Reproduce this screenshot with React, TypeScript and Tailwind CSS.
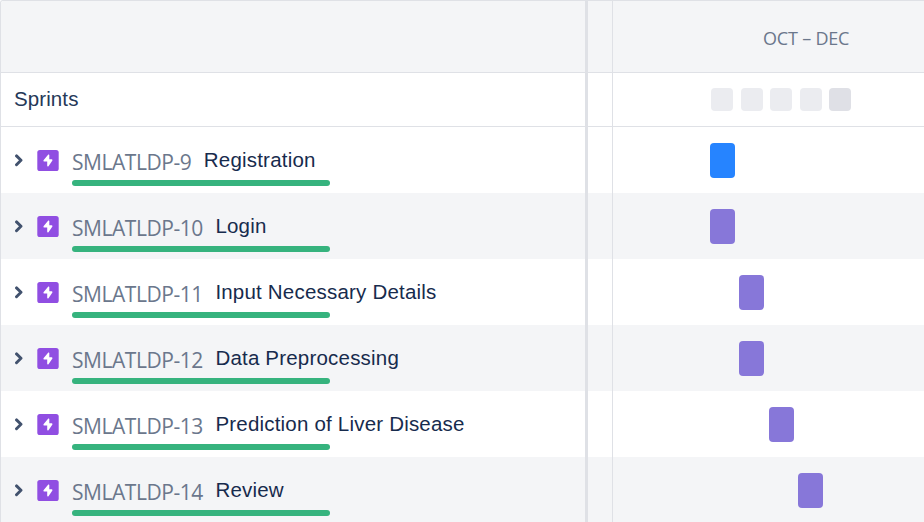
type Epic = {
  id: string;
  title: string;
  bar: string;
};

const epics: Epic[] = [
  { id: "SMLATLDP-9", title: "Registration", bar: "ml-[97px] bg-[#2684ff]" },
  { id: "SMLATLDP-10", title: "Login", bar: "ml-[97px] bg-[#8777d9]" },
  { id: "SMLATLDP-11", title: "Input Necessary Details", bar: "ml-[126.4px] bg-[#8777d9]" },
  { id: "SMLATLDP-12", title: "Data Preprocessing", bar: "ml-[126.4px] bg-[#8777d9]" },
  { id: "SMLATLDP-13", title: "Prediction of Liver Disease", bar: "ml-[155.8px] bg-[#8777d9]" },
  { id: "SMLATLDP-14", title: "Review", bar: "ml-[185px] bg-[#8777d9]" },
];

const sprints = [
  "bg-[#ebecf0]",
  "bg-[#ebecf0]",
  "bg-[#ebecf0]",
  "bg-[#ebecf0]",
  "bg-[#dfe0e6]",
];

function Chevron() {
  return (
    <svg className="h-[14px] w-[10px] shrink-0" viewBox="0 0 10 14" fill="none">
      <path
        d="M3.5 2.9 8 7.3 3.5 11.7"
        stroke="#42526e"
        strokeWidth="2.9"
        strokeLinecap="round"
        strokeLinejoin="round"
      />
    </svg>
  );
}

function EpicIcon() {
  return (
    <svg className="h-[21px] w-[22px] shrink-0" viewBox="0 0 22 21">
      <rect x="0.3" width="21.4" height="21" rx="2.6" fill="#904ee2" />
      <path
        d="M11.3 4.6 6.5 10.2Q6.1 11.5 7.2 11.6H10.2V15.8Q10.4 17 11.5 16.3L15.4 10.6Q15.8 9.4 14.7 9.2H12.3V5Q12 4 11.3 4.6Z"
        fill="#fff"
      />
    </svg>
  );
}

function stripe(index: number) {
  return index % 2 === 1 ? "bg-[#f4f5f7]" : "bg-white";
}

function EpicRow({ epic, index }: { epic: Epic; index: number }) {
  return (
    <div className={`flex h-[66px] shrink-0 items-start pl-3 ${stripe(index)}`}>
      <div className="flex h-[66px] items-center gap-[14px]">
        <Chevron />
        <EpicIcon />
      </div>
      <div className="ml-[13px] pt-[18px]">
        <div className="flex h-[35px] items-start whitespace-nowrap">
          <span className="pt-[2px] font-['Open_Sans','Noto_Sans',sans-serif] text-[21px] leading-[30px] tracking-[-0.45px] text-[#6b778c]">
            {epic.id}
          </span>
          <span className="ml-[12.5px] font-['Liberation_Sans',Arial,sans-serif] text-[20.5px] leading-[30px] tracking-[0.2px] text-[#172b4d]">
            {epic.title}
          </span>
        </div>
        <div className="h-[6px] w-[258px] rounded-full bg-[#36b37e]" />
      </div>
    </div>
  );
}

export default function App() {
  return (
    <div className="flex h-[522px] w-[924px] overflow-hidden rounded-tl-[3px] border-l border-t border-[#dfe1e6] bg-white">
      <div className="flex w-[584px] shrink-0 flex-col">
        <div className="h-[72px] shrink-0 border-b border-[#dfe1e6] bg-[#f4f5f7]" />
        <div className="flex h-[54px] shrink-0 items-center border-b border-[#dfe1e6] pl-[13px] font-['Liberation_Sans',Arial,sans-serif] text-[20.5px] tracking-[0.1px] text-[#253858]">
          Sprints
        </div>
        {epics.map((epic, i) => (
          <EpicRow key={epic.id} epic={epic} index={i} />
        ))}
      </div>

      <div className="w-[3px] shrink-0 bg-[#dfe1e6]" />

      <div className="flex w-[25px] shrink-0 flex-col border-r border-[#dfe1e6]">
        <div className="h-[72px] shrink-0 border-b border-[#dfe1e6] bg-[#f4f5f7]" />
        <div className="h-[54px] shrink-0 border-b border-[#dfe1e6]" />
        {epics.map((epic, i) => (
          <div key={epic.id} className={`h-[66px] shrink-0 ${stripe(i)}`} />
        ))}
      </div>

      <div className="flex min-w-0 flex-1 flex-col">
        <div className="flex h-[72px] shrink-0 items-center border-b border-[#dfe1e6] bg-[#f4f5f7] pl-[150px] pt-[4px] font-['Open_Sans','Noto_Sans',sans-serif] text-[18px] tracking-[-0.2px] text-[#6b778c]">
          OCT – DEC
        </div>
        <div className="flex h-[54px] shrink-0 items-center gap-[7.4px] border-b border-[#dfe1e6] pl-[98.4px]">
          {sprints.map((color, i) => (
            <div key={i} className={`h-[23.5px] w-[22px] rounded ${color}`} />
          ))}
        </div>
        {epics.map((epic, i) => (
          <div key={epic.id} className={`flex h-[66px] shrink-0 items-center pt-[1px] ${stripe(i)}`}>
            <div className={`h-[35px] w-[25px] rounded ${epic.bar}`} />
          </div>
        ))}
      </div>
    </div>
  );
}
